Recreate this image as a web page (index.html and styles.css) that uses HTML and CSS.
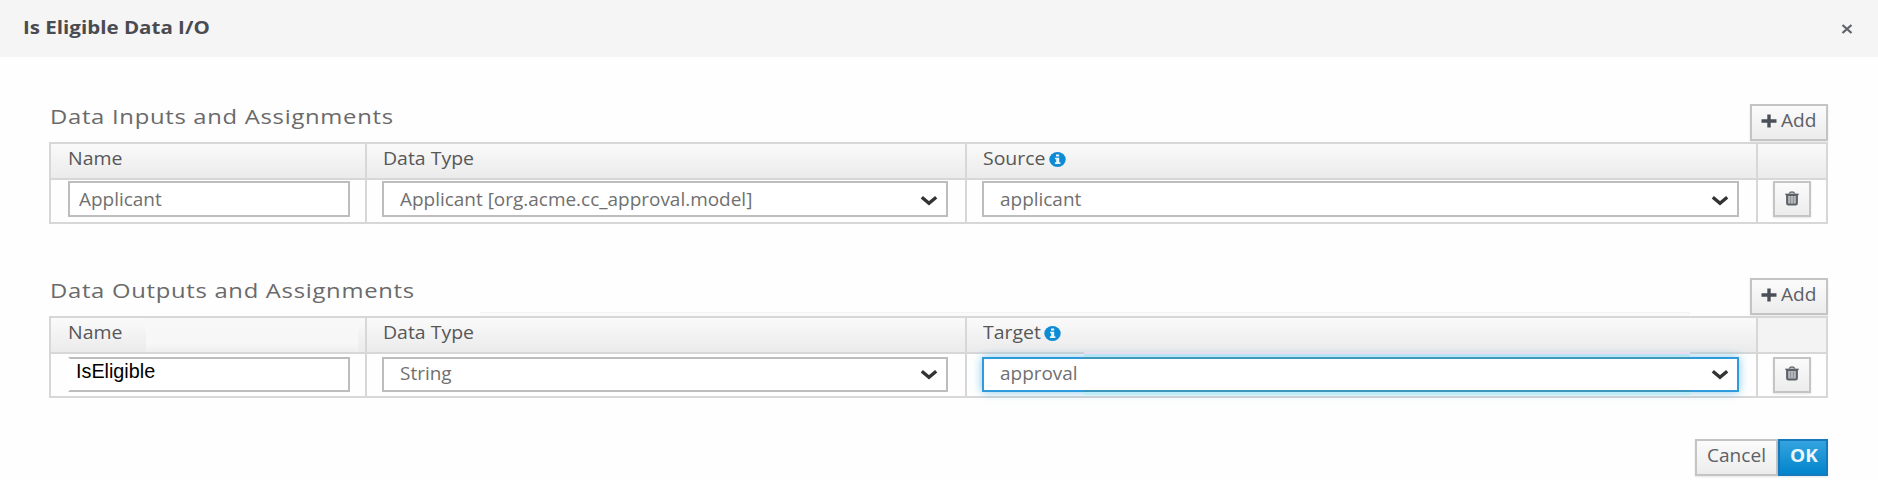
FILE: index.html
```html
<!DOCTYPE html>
<html lang="en">
<head>
<meta charset="utf-8">
<title>Is Eligible Data I/O</title>
<link rel="stylesheet" href="styles.css">
</head>
<body>
<svg width="0" height="0" class="defs">
  <symbol id="chevron" viewBox="0 0 18 11"><path d="M1.8 2.2 9 8.2 16.2 2.2" fill="none" stroke="#333" stroke-width="3.4"/></symbol>
  <symbol id="plus" viewBox="0 0 16 14"><path d="M8 0.5v13M0.5 7h15" fill="none" stroke="#4b5058" stroke-width="3.4"/></symbol>
  <symbol id="trash" viewBox="0 0 14 15"><path d="M4.3 2.6Q4.8 1 7 1T9.7 2.6" fill="none" stroke="#6a6e75" stroke-width="1.5"/><path d="M0.3 2.6h13.4v1.6H0.3z" fill="#6a6e75"/><path d="M2.1 4v8.3q0 1.3 1.3 1.3h7.2q1.3 0 1.3-1.3V4z" fill="#b3b5b9" stroke="#5d6168" stroke-width="2"/><path d="M5.5 5.5v6.5M8.5 5.5v6.5" stroke="#93969b" stroke-width="1"/></symbol>
  <symbol id="info" viewBox="0 0 17 15"><ellipse cx="8.5" cy="7.5" rx="8.2" ry="7.4" fill="#0d8bd4"/><path d="M7 2.4h3.2v2H7zM6 5.7h4.2v4.6h1.2v1.7H5.9v-1.7h1.3V7.3H6z" fill="#e8f5fc"/></symbol>
</svg>
<div class="dialog">
  <header class="dialog-header">
    <h1 class="dialog-title">Is Eligible Data I/O</h1>
    <svg class="close" viewBox="0 0 12 10"><path d="M1.5 1 10.5 9M10.5 1 1.5 9" fill="none" stroke="#60636a" stroke-width="2.3"/></svg>
  </header>

  <section class="section inputs">
    <div class="section-head">
      <h2 class="section-title">Data Inputs and Assignments</h2>
      <button class="btn add"><svg class="plus"><use href="#plus"/></svg><span class="btn-label">Add</span></button>
    </div>
    <div class="table">
      <div class="row head">
        <div class="cell"><span class="th">Name</span></div>
        <div class="cell"><span class="th">Data Type</span></div>
        <div class="cell"><span class="th source">Source</span><svg class="info"><use href="#info"/></svg></div>
        <div class="cell"></div>
      </div>
      <div class="row body">
        <div class="cell"><div class="field"><span class="value">Applicant</span></div></div>
        <div class="cell"><div class="field select"><span class="value">Applicant [org.acme.cc_approval.model]</span><svg class="chevron"><use href="#chevron"/></svg></div></div>
        <div class="cell"><div class="field select"><span class="value">applicant</span><svg class="chevron"><use href="#chevron"/></svg></div></div>
        <div class="cell"><button class="btn delete"><svg class="trash"><use href="#trash"/></svg></button></div>
      </div>
    </div>
  </section>

  <section class="section outputs">
    <div class="section-head">
      <h2 class="section-title">Data Outputs and Assignments</h2>
      <button class="btn add"><svg class="plus"><use href="#plus"/></svg><span class="btn-label">Add</span></button>
    </div>
    <div class="table">
      <div class="band"></div>
      <div class="row head">
        <div class="cell flat"><span class="th">Name</span></div>
        <div class="cell"><span class="th">Data Type</span></div>
        <div class="cell"><span class="th target">Target</span><svg class="info"><use href="#info"/></svg></div>
        <div class="cell plain"></div>
      </div>
      <div class="row body">
        <div class="cell"><div class="field editing"><span class="edit-value">IsEligible</span></div></div>
        <div class="cell"><div class="field select"><span class="value">String</span><svg class="chevron"><use href="#chevron"/></svg></div></div>
        <div class="cell"><div class="field select focused"><span class="value">approval</span><svg class="chevron"><use href="#chevron"/></svg></div></div>
        <div class="cell"><button class="btn delete"><svg class="trash"><use href="#trash"/></svg></button></div>
      </div>
    </div>
  </section>

  <footer class="dialog-footer">
    <button class="btn cancel"><span class="btn-label">Cancel</span></button>
    <button class="btn ok"><span class="btn-label">OK</span></button>
  </footer>
</div>
</body>
</html>
```
FILE: styles.css
```css
*, *::before, *::after { box-sizing: border-box; }
body { margin: 0; background: #fff; font-family: "Open Sans", sans-serif; color: #666; overflow: hidden; }
.defs { position: absolute; }
.dialog { width: 1878px; height: 480px; background: #fefefe; }
.dialog-header { display: flex; justify-content: space-between; height: 57px; padding: 15px 25px 0 23px; background: #f5f5f5; }
.dialog-title { margin: 0; font-size: 18px; font-weight: 700; line-height: 25px; color: #4a4b50; transform: scaleX(1.14); transform-origin: 0 0; }
.close { width: 12px; height: 10px; margin-top: 9px; }

.section { padding: 0 50px 0 49px; }
.inputs { padding-top: 47px; }
.outputs { padding-top: 54px; }
.section-head { display: flex; justify-content: space-between; height: 38px; }
.section-title { margin: -2px 0 0 1px; font-size: 20px; font-weight: 400; line-height: 30px; letter-spacing: 0.6px; color: #6a6a6a; transform: scaleX(1.19); transform-origin: 0 0; }

.btn { display: flex; align-items: center; margin: 0; padding: 0; border: 2px solid #c4c4c4; background: linear-gradient(#fbfbfb, #ececec); color: #5d6067; font-family: inherit; font-size: 18px; font-weight: 500; line-height: 24px; box-shadow: 0 1px 2px rgba(0, 0, 0, .1); }
.btn-label { transform-origin: 0 0; transform: scaleX(1.06); }
.add { width: 78px; height: 37px; padding: 0 0 5px 9px; gap: 4px; }
.plus { width: 16px; height: 14px; margin-top: 2px; }

.table { position: relative; border: 2px solid #d7d7d7; border-right: 0; }
.row { display: grid; grid-template-columns: 316px 600px 791px 70px; }
.head { height: 36px; border-bottom: 2px solid #d7d7d7; background: linear-gradient(#fafafa, #ebebeb); }
.body { height: 42px; }
.cell { display: flex; align-items: flex-start; padding-left: 15px; border-right: 2px solid #d7d7d7; }
.cell:first-child { padding-left: 17px; }
.th { margin: 2px 0 0 1px; font-size: 18px; line-height: 24px; font-weight: 500; color: #575757; transform: scaleX(1.08); transform-origin: 0 0; }
.cell:first-child .th { margin-left: 0; }
.source { width: 66px; }
.target { width: 61px; }
.info { width: 17px; height: 15px; margin-top: 8px; }
.flat { background: linear-gradient(#f8f8f8, #f7f7f7 75%, #eee) 95px 0 / 212px 100% no-repeat; }
.plain { background: #f3f3f3; }
.band { position: absolute; left: 429px; top: -6px; width: 1210px; height: 4px; border-top: 1px solid #f3f3f3; background: #fafafa; }

.field { display: flex; justify-content: space-between; width: 282px; height: 36px; margin-top: 1px; padding: 4px 8px 0 9px; border: 2px solid #bdbdbd; background: #fff; }
.cell:nth-child(2) .field { width: 566px; }
.cell:nth-child(3) .field { width: 757px; }
.select { padding-left: 16px; }
.value { font-size: 18px; line-height: 25px; color: #707070; transform: scaleX(1.053); transform-origin: 0 0; white-space: nowrap; }
.chevron { width: 18px; height: 11px; margin-top: 8px; }
.delete { justify-content: center; width: 38px; height: 36px; margin-top: 1px; padding-bottom: 2px; }
.trash { width: 14px; height: 15px; }

.outputs .field { height: 35px; margin-top: 3px; padding-top: 2px; }
.outputs .chevron { margin-top: 8px; }
.outputs .delete { margin-top: 3px; padding-bottom: 4px; }
.outputs .editing { border-left-color: transparent; padding-left: 6px; padding-top: 0; }
.edit-value { font-family: "Liberation Sans", Arial, sans-serif; font-size: 19.8px; line-height: 24px; color: #000; }
.outputs .focused { position: relative; border-color: #2f9bdc; box-shadow: 0 0 9px rgba(57, 165, 220, .6); }
.focused::before { content: ""; position: absolute; left: 100px; right: 47px; top: -7px; height: 7px; border-bottom: 2px solid #4099bd; background: linear-gradient(#ecdcef 2px, #b4e6f4 2px); }
.focused::after { content: ""; position: absolute; left: 100px; right: 47px; bottom: -5px; height: 5px; border-top: 2px solid #3c96bb; background: #bdedf8; }

.dialog-footer { display: flex; justify-content: flex-end; padding: 41px 50px 0 0; }
.cancel { width: 83px; height: 37px; padding: 0 0 5px 10px; }
.ok { width: 50px; height: 37px; padding: 0 0 5px 10px; border-color: #1479bd; background: linear-gradient(#35a3de, #0284cc); color: #e9f6fd; font-weight: 700; }
```
